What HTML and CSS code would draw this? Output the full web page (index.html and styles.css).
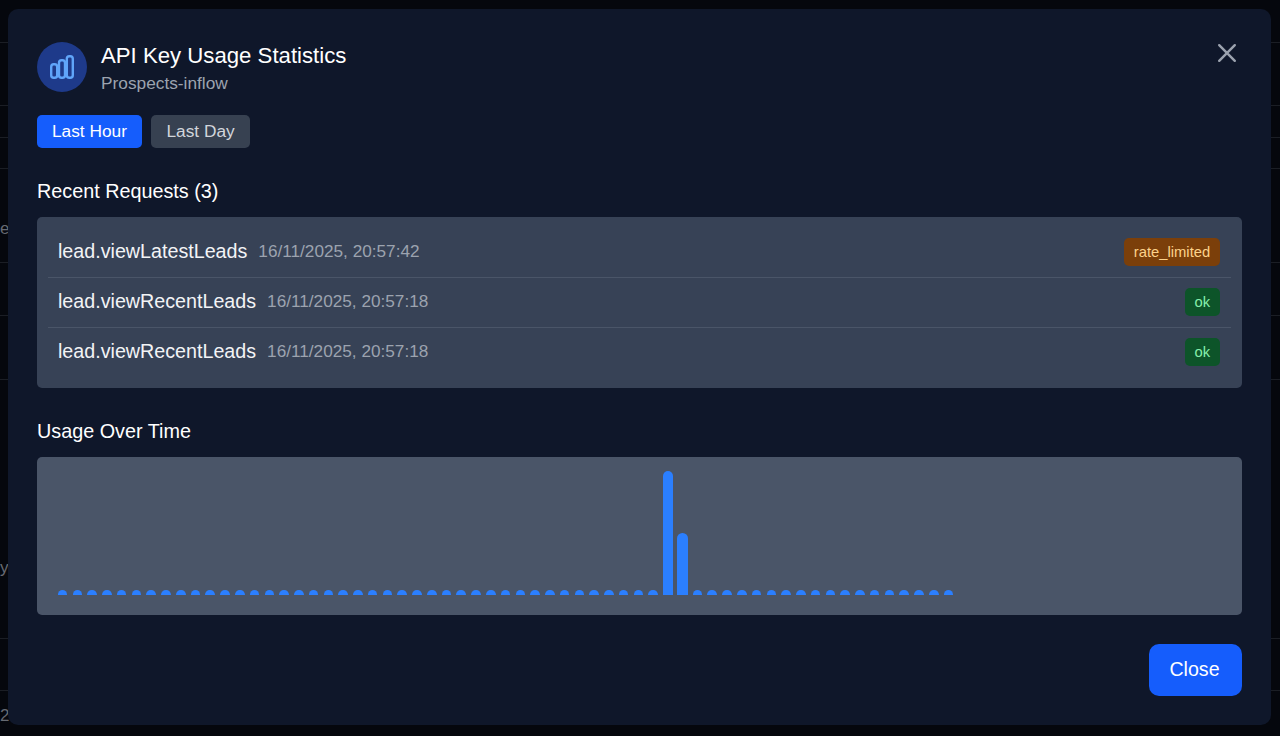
FILE: index.html
```html
<!DOCTYPE html>
<html lang="en">
<head>
    <meta charset="UTF-8">
    <meta name="viewport" content="width=device-width, initial-scale=1.0">
    <title>API Key Usage Statistics</title>
    <link rel="stylesheet" href="styles.css">
</head>
<body>
    <!-- page dimmed behind the modal -->
    <div class="backdrop">
        <div class="bg-row"></div>
        <div class="bg-row"></div>
        <div class="bg-row"></div>
        <div class="bg-row"></div>
        <div class="bg-row"><span class="bg-text bg-text-e">e</span></div>
        <div class="bg-row"></div>
        <div class="bg-row"></div>
        <div class="bg-row"><span class="bg-text bg-text-y">y</span></div>
        <div class="bg-row"></div>
        <div class="bg-row"><span class="bg-text bg-text-2">2</span></div>
    </div>

    <div class="overlay">
        <div class="modal">
            <div class="modal-header">
                <div class="header-left">
                    <div class="icon-circle">
                        <svg class="chart-icon" viewBox="0 0 24 24" fill="none" stroke="currentColor" stroke-width="2.4">
                            <rect x="1.2" y="9.3" width="6" height="13.5" rx="2.6"/>
                            <rect x="9" y="5.3" width="6" height="17.5" rx="2.6"/>
                            <rect x="16.8" y="1.2" width="6" height="21.6" rx="2.6"/>
                        </svg>
                    </div>
                    <div class="header-text">
                        <h2 class="modal-title">API Key Usage Statistics</h2>
                        <p class="modal-subtitle">Prospects-inflow</p>
                    </div>
                </div>
                <button class="close-x" aria-label="Close">
                    <svg viewBox="0 0 20 20" fill="none" stroke="currentColor" stroke-width="2.4" stroke-linecap="round">
                        <path d="M2.2 2.2l15.6 15.6M17.8 2.2L2.2 17.8"/>
                    </svg>
                </button>
            </div>

            <div class="tabs">
                <button class="tab active">Last Hour</button>
                <button class="tab">Last Day</button>
            </div>

            <h3 class="section-title">Recent Requests (3)</h3>
            <div class="request-list">
                <div class="request-row">
                    <span class="request-name">lead.viewLatestLeads</span>
                    <span class="request-time">16/11/2025, 20:57:42</span>
                    <span class="badge badge-limited">rate_limited</span>
                </div>
                <div class="request-row">
                    <span class="request-name">lead.viewRecentLeads</span>
                    <span class="request-time">16/11/2025, 20:57:18</span>
                    <span class="badge badge-ok">ok</span>
                </div>
                <div class="request-row">
                    <span class="request-name">lead.viewRecentLeads</span>
                    <span class="request-time">16/11/2025, 20:57:18</span>
                    <span class="badge badge-ok">ok</span>
                </div>
            </div>

            <h3 class="section-title">Usage Over Time</h3>
            <div class="chart" id="chart"></div>

            <div class="modal-footer">
                <button class="close-btn">Close</button>
            </div>
        </div>
    </div>

    <script>
        // Requests per minute, one bar each
        const usage = Array(61).fill(0);
        usage[41] = 2;
        usage[42] = 1;

        const chart = document.getElementById('chart');
        usage.forEach(count => {
            const slot = document.createElement('div');
            slot.className = 'bar-slot';
            const bar = document.createElement('div');
            bar.className = count === 0 ? 'bar bar-idle' : 'bar';
            bar.style.height = (count === 0 ? 5 : count * 62) + 'px';
            slot.appendChild(bar);
            chart.appendChild(slot);
        });
    </script>
</body>
</html>
```

FILE: styles.css
```css
body {
    margin: 0;
    padding: 0;
    font-family: "Liberation Sans", Arial, sans-serif;
    background-color: #05070d;
    height: 736px;
    overflow: hidden;
}
.backdrop {
    display: grid;
    grid-template-rows: 43px 63px 32px 31px 94px 53px 64px 259px 52px 45px;
    height: 736px;
}
.bg-row {
    display: flex;
    align-items: flex-end;
    justify-content: flex-end;
    border-bottom: 1px solid #1b1e25;
    box-sizing: border-box;
}
.bg-row:last-child {
    border-bottom: none;
}
.bg-text {
    color: #666a72;
    font-size: 17px;
    width: 8px;
    margin-right: auto;
    text-align: center;
}
.bg-text-e {
    padding-bottom: 23px;
}
.bg-text-y {
    padding-bottom: 60px;
}
.bg-text-2 {
    padding-bottom: 10px;
}
.overlay {
    position: fixed;
    top: 0;
    left: 0;
    width: 100%;
    height: 100%;
    box-sizing: border-box;
    padding: 9px 9px 11px 8px;
}
.modal {
    background-color: #0f172a;
    border-radius: 10px;
    padding: 33px 29px 29px;
    height: 100%;
    box-sizing: border-box;
    color: white;
}
.modal-header {
    display: flex;
    justify-content: space-between;
    align-items: flex-start;
    height: 50px;
    margin-bottom: 23px;
}
.header-left {
    display: flex;
    gap: 14px;
}
.icon-circle {
    width: 50px;
    height: 50px;
    border-radius: 50%;
    background-color: #1e3a8a;
    color: #60a5fa;
    display: flex;
    align-items: center;
    justify-content: center;
}
.chart-icon {
    width: 24px;
    height: 24px;
}
.modal-title {
    margin: 0;
    font-size: 22.2px;
    font-weight: 400;
    line-height: 28px;
}
.modal-subtitle {
    margin: 3px 0 0;
    font-size: 17.3px;
    line-height: 20px;
    color: #9ca3af;
}
.close-x {
    background: none;
    border: none;
    padding: 0;
    margin: 0.5px 5.5px 0 0;
    color: #9ca3af;
    width: 20px;
    height: 20px;
    cursor: pointer;
}
.close-x svg {
    display: block;
    width: 20px;
    height: 20px;
}
.tabs {
    display: flex;
    gap: 9.5px;
}
.tab {
    height: 33px;
    padding: 0 15px;
    border: none;
    border-radius: 5px;
    background-color: #374151;
    color: #d1d5db;
    font-family: inherit;
    font-size: 17.3px;
    cursor: pointer;
}
.tab.active {
    background-color: #155dfc;
    color: white;
}
.section-title {
    margin: 31px 0 14px;
    font-size: 19.8px;
    font-weight: 400;
    line-height: 24px;
}
.request-list {
    background-color: #374256;
    border-radius: 5px;
    padding: 11px;
}
.request-row {
    display: flex;
    align-items: center;
    height: 50px;
    box-sizing: border-box;
    padding: 0 11px 2px 10px;
    border-bottom: 1px solid #4a5568;
}
.request-row:last-child {
    border-bottom: none;
    height: 49px;
}
.request-name {
    font-size: 19.7px;
    color: #f3f4f6;
}
.request-time {
    margin-left: 11px;
    font-size: 17.2px;
    color: #9ca3af;
}
.badge {
    margin-left: auto;
    height: 28px;
    line-height: 28px;
    padding: 0 9.8px;
    border-radius: 5px;
    font-size: 14.8px;
}
.badge-limited {
    background-color: #7b3f0a;
    color: #fdd28a;
}
.badge-ok {
    background-color: #0d5429;
    color: #86efac;
}
.chart {
    display: flex;
    gap: 3.98px;
    height: 158px;
    box-sizing: border-box;
    padding: 0 20px 20px 20.2px;
    background-color: #4a5568;
    border-radius: 5px;
}
.bar-slot {
    display: flex;
    align-items: flex-end;
    justify-content: center;
    width: 10.8px;
    flex-shrink: 0;
}
.bar {
    width: 10.8px;
    background-color: #2b7fff;
    border-radius: 5.4px 5.4px 0 0;
}
.bar-idle {
    width: 9.6px;
    border-radius: 4.8px 4.8px 0 0;
}
.modal-footer {
    display: flex;
    justify-content: flex-end;
    margin-top: 29px;
}
.close-btn {
    width: 93px;
    height: 52px;
    padding: 0 2px 2px 0;
    border: none;
    border-radius: 10px;
    background-color: #155dfc;
    color: white;
    font-family: inherit;
    font-size: 19.6px;
    cursor: pointer;
}
```
